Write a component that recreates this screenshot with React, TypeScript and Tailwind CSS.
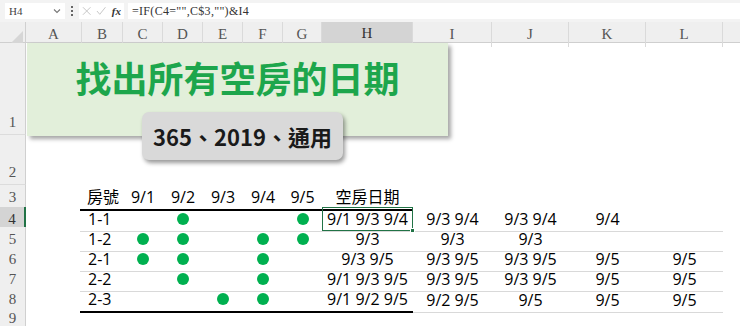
import React from "react"

const cols = "grid-cols-[26px_56px_41px_40px_40px_40px_40px_39px_91px_79px_77px_77px_77px_77px]"

const letters = ["A", "B", "C", "D", "E", "F", "G", "H", "I", "J", "K", "L", "M"]

const rows = [
  { id: "1-1", dots: [0, 1, 0, 0, 1], vals: ["9/1 9/3 9/4", "9/3 9/4", "9/3 9/4", "9/4", ""] },
  { id: "1-2", dots: [1, 1, 0, 1, 1], vals: ["9/3", "9/3", "9/3", "", ""] },
  { id: "2-1", dots: [1, 1, 0, 1, 0], vals: ["9/3 9/5", "9/3 9/5", "9/3 9/5", "9/5", "9/5"] },
  { id: "2-2", dots: [0, 1, 0, 1, 0], vals: ["9/1 9/3 9/5", "9/3 9/5", "9/3 9/5", "9/5", "9/5"] },
  { id: "2-3", dots: [0, 0, 1, 1, 0], vals: ["9/1 9/2 9/5", "9/2 9/5", "9/5", "9/5", "9/5"] },
]

const serif = "font-['Liberation_Serif',serif]"
const cell = "font-['Open_Sans','Noto_Sans_CJK_TC',sans-serif] text-[16px] text-black"

function RowHead({ n, active, className = "" }: { n: number; active?: boolean; className?: string }) {
  return (
    <div
      className={`${serif} flex justify-center text-[15px] border-b border-[#dcdcdc] ${
        active ? "bg-[#d4d4d4] border-r-2 border-r-[#217346] text-[#333]" : "bg-[#efefef] border-r border-r-[#d0d0d0] text-[#555]"
      } ${className}`}
    >
      {n}
    </div>
  )
}

export default function App() {
  return (
    <div className="w-[740px] h-[326px] overflow-hidden bg-white relative">
      {/* 수식 입력줄 */}
      <div className="h-[22px] bg-[#f3f3f3] flex items-center pl-[5px] gap-[4px]">
        <div className="w-[60px] h-[16px] bg-white flex items-center justify-between px-[4px]">
          <span className={`${serif} text-[11px] text-[#444]`}>H4</span>
          <svg width="8" height="6" viewBox="0 0 8 6">
            <path d="M1 1.5 L4 4.5 L7 1.5" stroke="#777" strokeWidth="1.1" fill="none" />
          </svg>
        </div>
        <div className="flex flex-col gap-[2px] px-[2px]">
          <span className="w-[2px] h-[2px] bg-[#666]" />
          <span className="w-[2px] h-[2px] bg-[#666]" />
          <span className="w-[2px] h-[2px] bg-[#666]" />
        </div>
        <div className="w-[45px] h-[16px] bg-white flex items-center gap-[5px] px-[3px]">
          <svg width="10" height="10" viewBox="0 0 10 10">
            <path d="M1 1 L9 9 M9 1 L1 9" stroke="#c4c4c4" strokeWidth="1" />
          </svg>
          <svg width="11" height="10" viewBox="0 0 11 10">
            <path d="M1 5 L4 8.5 L10 1" stroke="#c4c4c4" strokeWidth="1" fill="none" />
          </svg>
          <span className={`${serif} italic font-bold text-[11px] text-[#333]`}>fx</span>
        </div>
        <div className="flex-1 h-[16px] bg-white flex items-center pl-[4px]">
          <span className={`${serif} text-[12px] tracking-[0.3px] text-[#333]`}>=IF(C4=&quot;&quot;,C$3,&quot;&quot;)&amp;I4</span>
        </div>
      </div>

      {/* 열 머리글 */}
      <div className={`grid ${cols} h-[21px] bg-[#efefef] border-b border-[#cfcfcf]`}>
        <div className="border-r border-[#d0d0d0] flex items-end justify-end p-[2px]">
          <svg width="14" height="14" viewBox="0 0 14 14">
            <path d="M14 0 L14 14 L0 14 Z" fill="#d6d6d6" />
          </svg>
        </div>
        {letters.map((l) => (
          <div
            key={l}
            className={`${serif} flex items-center justify-center text-[15px] border-r border-[#dadada] ${
              l === "H" ? "bg-[#d4d4d4] border-b-2 border-b-[#217346] text-[#333]" : "text-[#555]"
            }`}
          >
            {l}
          </div>
        ))}
      </div>

      {/* 1행 */}
      <div className={`grid ${cols} h-[92px]`}>
        <RowHead n={1} className="items-end pb-[1px]" />
      </div>
      {/* 2행 */}
      <div className={`grid ${cols} h-[50px]`}>
        <RowHead n={2} className="items-end pb-[1px]" />
      </div>

      {/* 3행: 헤더 */}
      <div className={`grid ${cols} h-[22px]`}>
        <RowHead n={3} className="items-center" />
        <div />
        <div className={`${cell} col-span-7 -ml-[2px] grid grid-cols-[43px_40px_40px_40px_40px_39px_91px] border-b-2 border-black items-center`}>
          <span className="pl-[7px]">房號</span>
          {["9/1", "9/2", "9/3", "9/4", "9/5"].map((d) => (
            <span key={d} className="text-center">
              {d}
            </span>
          ))}
          <span className="text-center">空房日期</span>
        </div>
      </div>

      {/* 데이터 */}
      {rows.map((r, ri) => {
        const last = ri === rows.length - 1
        return (
          <div key={r.id} className={`grid ${cols} h-[20px]`}>
            <RowHead n={ri + 4} active={ri === 0} className="items-center" />
            <div />
            <div
              className={`${cell} col-span-7 -ml-[2px] grid grid-cols-[43px_40px_40px_40px_40px_39px_91px] items-center ${
                last ? "border-b-2 border-black" : "border-b border-[#d9d9d9]"
              }`}
            >
              <span className="pl-[8px]">{r.id}</span>
              {r.dots.map((d, di) => (
                <span key={di} className="flex justify-center">
                  {d ? <span className="w-[12px] h-[12px] rounded-full bg-[#00b050]" /> : null}
                </span>
              ))}
              <span className="text-center relative h-full flex items-center justify-center">
                {r.vals[0]}
                {ri === 0 && (
                  <span className="absolute inset-0 border border-[#217346]">
                    <span className="absolute -right-[3px] -bottom-[3px] w-[5px] h-[5px] bg-[#217346] border border-white" />
                  </span>
                )}
              </span>
            </div>
            <div className={`${cell} col-span-4 grid grid-cols-[79px_77px_77px_77px] items-center border-b border-[#d9d9d9]`}>
              {r.vals.slice(1).map((v, vi) => (
                <span key={vi} className="text-center">
                  {v}
                </span>
              ))}
            </div>
          </div>
        )
      })}

      {/* 9행 */}
      <div className={`grid ${cols} h-[20px]`}>
        <RowHead n={9} className="items-center" />
      </div>

      {/* 제목 도형 */}
      <div className="absolute left-[27px] top-[43px] w-[421px] h-[93px] bg-[#e2efda] shadow-[3px_3px_4px_rgba(0,0,0,0.35)] flex justify-center pt-[16px]">
        <span className="font-['Noto_Sans_CJK_TC',sans-serif] font-bold text-[36px] leading-none text-[#1da64c]">
          找出所有空房的日期
        </span>
      </div>
      <div className="absolute left-[142px] top-[112px] w-[201px] h-[48px] rounded-[7px] bg-[#d9d9d9] shadow-[2px_3px_4px_rgba(0,0,0,0.4)] flex items-center justify-center">
        <span className="font-['Noto_Sans_CJK_TC',sans-serif] font-bold text-[22px] text-[#1a1a1a]">365、2019、通用</span>
      </div>
    </div>
  )
}
